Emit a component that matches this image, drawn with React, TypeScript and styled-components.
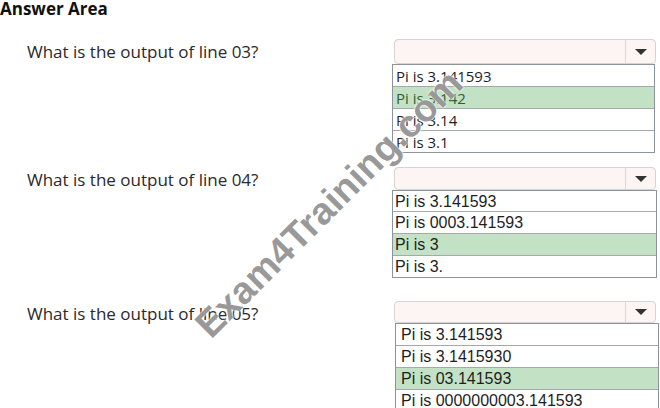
import React from 'react';
import styled, { createGlobalStyle } from 'styled-components';

const GlobalStyle = createGlobalStyle`
  html, body {
    margin: 0;
    padding: 0;
    background: #fff;
  }
  body {
    font-family: "Open Sans", "Noto Sans", sans-serif;
    color: #222;
  }
`;

const Page = styled.div`
  position: relative;
  width: 660px;
  height: 408px;
  overflow: hidden;
  background: #fff;
`;

const Heading = styled.h1`
  margin: 0;
  font-size: 17px;
  line-height: 18px;
  font-weight: 700;
  color: #111;
`;

const Row = styled.div<{ $gap: number }>`
  display: grid;
  grid-template-columns: 392px 1fr;
  margin-top: ${p => p.$gap}px;
`;

const Label = styled.div`
  padding-left: 27px;
  padding-top: 1px;
  font-size: 17px;
  line-height: 24px;
  color: #2a2a2a;
`;

const Dropdown = styled.div`
  display: flex;
  flex-direction: column;
`;

const Select = styled.div<{ $h: number }>`
  display: flex;
  justify-content: flex-end;
  width: 262px;
  height: ${p => p.$h}px;
  margin-left: 2px;
  box-sizing: border-box;
  border: 1px solid #d4d4d4;
  border-radius: 4px;
  background: #fdf4f4;
`;

const ArrowBox = styled.div`
  display: flex;
  align-items: center;
  justify-content: center;
  width: 29px;
  border-left: 1px solid #d9d9d9;
`;

const Arrow = styled.span`
  width: 0;
  height: 0;
  border-left: 6px solid transparent;
  border-right: 6px solid transparent;
  border-top: 6px solid #333;
`;

const List = styled.ul<{ $inset: number; $w: number }>`
  list-style: none;
  margin: 0 0 0 ${p => p.$inset}px;
  padding: 0;
  width: ${p => p.$w}px;
  box-sizing: border-box;
  border: 1px solid #8d939a;
  background: #fff;
`;

const Item = styled.li<{ $h: number; $shift: number; $on?: boolean; $arial?: boolean; $pad: number }>`
  box-sizing: border-box;
  height: ${p => p.$h}px;
  padding-top: ${p => p.$shift}px;
  line-height: ${p => p.$h - p.$shift}px;
  padding-left: ${p => p.$pad}px;
  white-space: nowrap;
  font-family: ${p => (p.$arial ? '"Liberation Sans", Arial, sans-serif' : '"Open Sans", "Noto Sans", sans-serif')};
  font-size: ${p => (p.$arial ? 16 : 15)}px;
  color: ${p => (p.$on && !p.$arial ? '#2f5f2f' : '#1e1e1e')};
  background: ${p => (p.$on ? '#c3e2c5' : '#fff')};
  & + & {
    border-top: 1px solid #a4a9ae;
    height: ${p => p.$h + 1}px;
  }
`;

const Watermark = styled.div`
  position: absolute;
  left: 329px;
  top: 204px;
  transform: translate(-50%, -50%) rotate(-45deg);
  font-family: "Liberation Sans", Arial, sans-serif;
  font-weight: 700;
  font-size: 38px;
  white-space: nowrap;
  color: rgba(135, 135, 135, 0.85);
  text-shadow: 0 0 2px #fff, 0 0 2px #fff;
  pointer-events: none;
`;

type Question = {
  text: string;
  gap: number;
  selectH: number;
  rowH: number;
  shift: number;
  inset: number;
  width: number;
  pad: number;
  arial: boolean;
  options: string[];
  answer: number;
};

const questions: Question[] = [
  {
    text: 'What is the output of line 03?',
    gap: 21, selectH: 25, rowH: 21, shift: 2, inset: 0, width: 263, pad: 3, arial: false,
    options: ['Pi is 3.141593', 'Pi is 3.142', 'Pi is 3.14', 'Pi is 3.1'],
    answer: 1,
  },
  {
    text: 'What is the output of line 04?',
    gap: 14, selectH: 23, rowH: 20, shift: 2, inset: 0, width: 265, pad: 2, arial: true,
    options: ['Pi is 3.141593', 'Pi is 0003.141593', 'Pi is 3', 'Pi is 3.'],
    answer: 2,
  },
  {
    text: 'What is the output of line 05?',
    gap: 23, selectH: 22, rowH: 21, shift: 0, inset: 3, width: 264, pad: 5, arial: true,
    options: ['Pi is 3.141593', 'Pi is 3.1415930', 'Pi is 03.141593', 'Pi is 0000000003.141593'],
    answer: 2,
  },
];

export default function App() {
  return (
    <Page>
      <GlobalStyle />
      <Heading>Answer Area</Heading>
      {questions.map(q => (
        <Row key={q.text} $gap={q.gap}>
          <Label>{q.text}</Label>
          <Dropdown>
            <Select $h={q.selectH}>
              <ArrowBox>
                <Arrow />
              </ArrowBox>
            </Select>
            <List $inset={q.inset} $w={q.width}>
              {q.options.map((o, i) => (
                <Item
                  key={o}
                  $h={q.rowH}
                  $shift={q.shift}
                  $on={i === q.answer}
                  $arial={q.arial}
                  $pad={q.pad}
                >
                  {o}
                </Item>
              ))}
            </List>
          </Dropdown>
        </Row>
      ))}
      <Watermark>Exam4Training.com</Watermark>
    </Page>
  );
}
